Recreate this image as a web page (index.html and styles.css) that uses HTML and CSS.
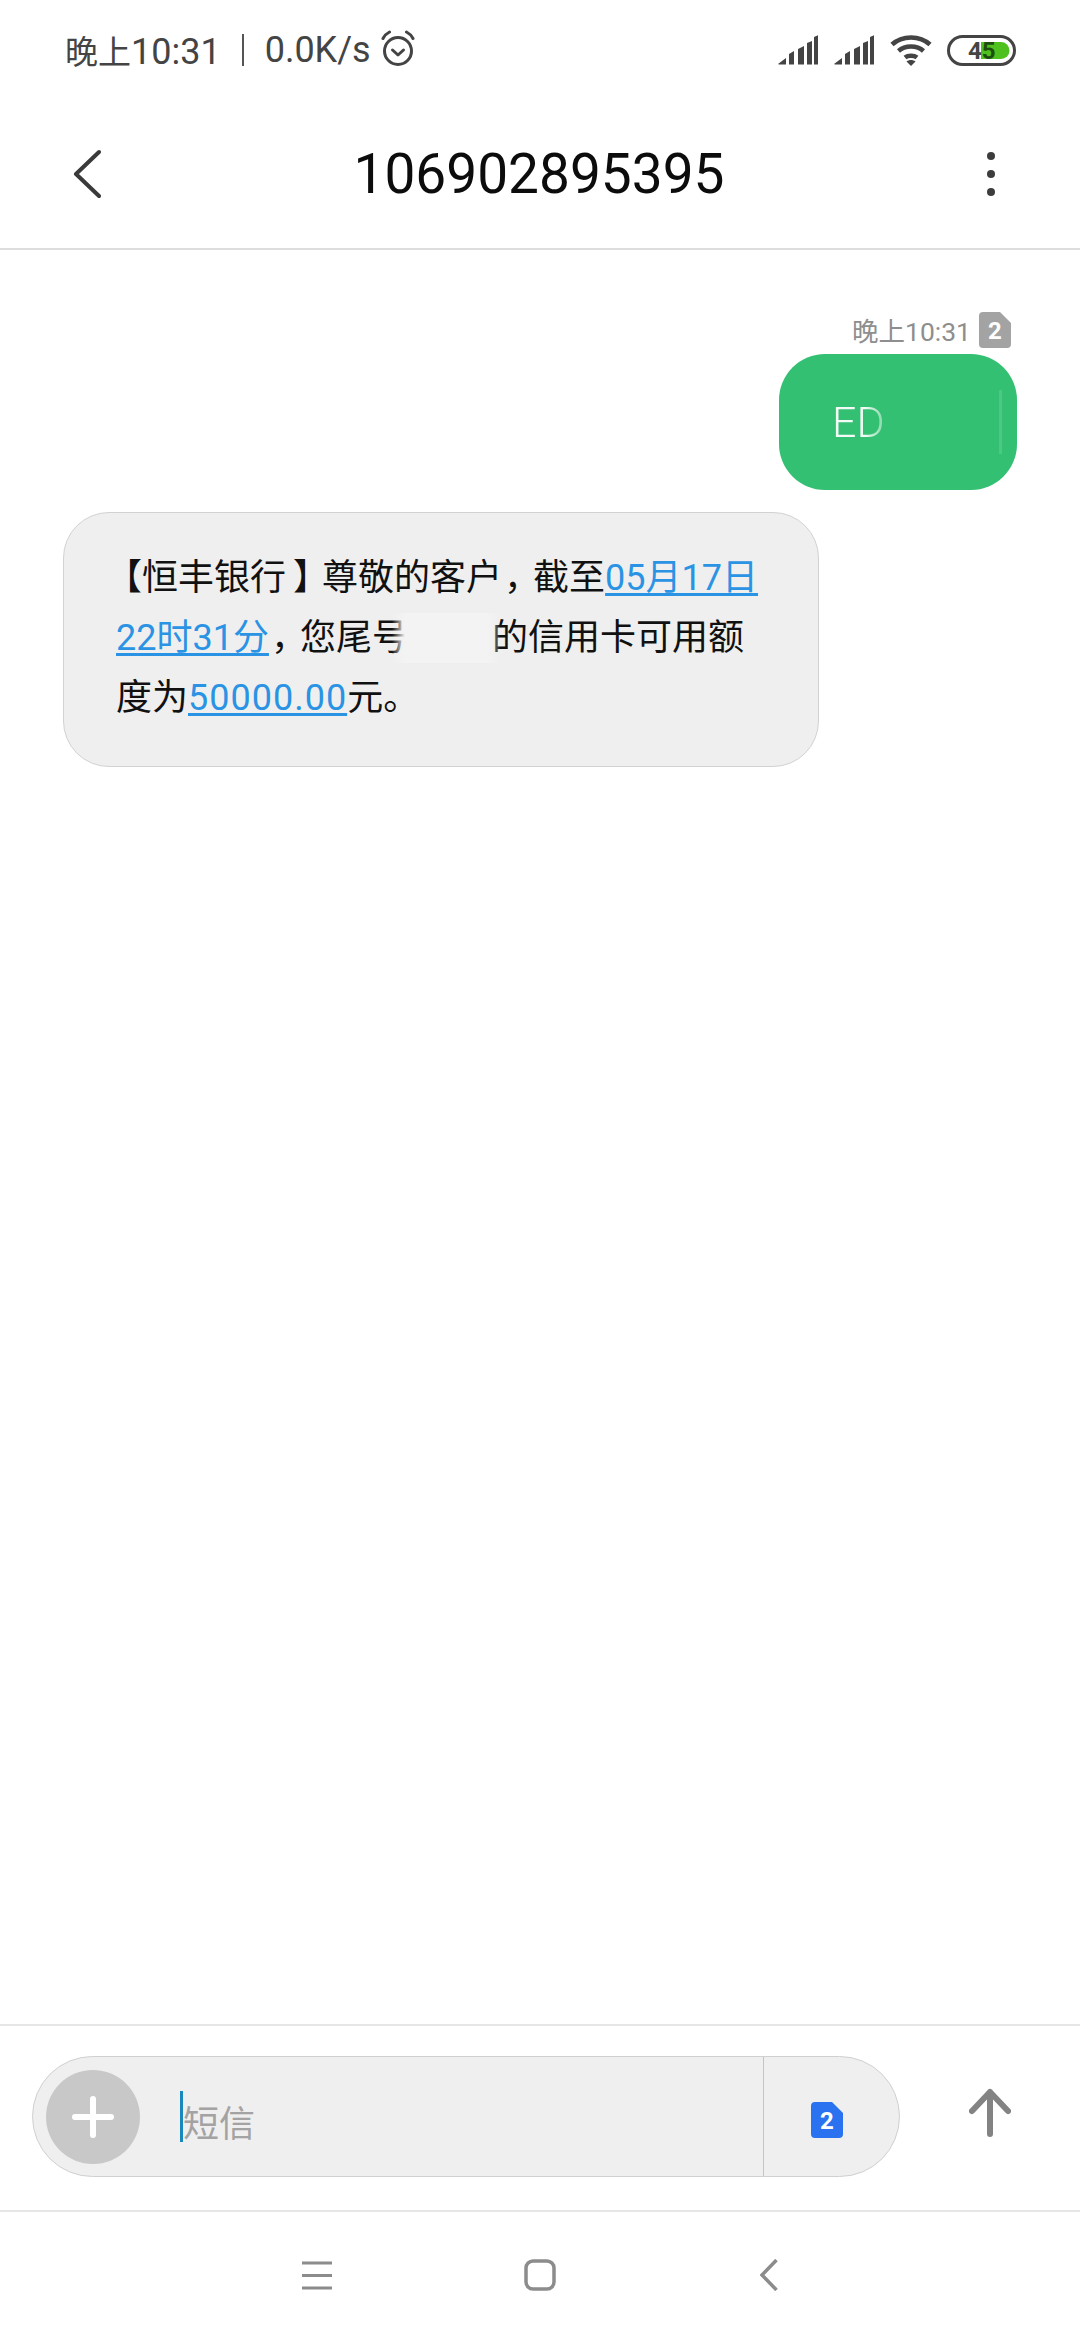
FILE: index.html

```html
<!DOCTYPE html>
<html lang="zh-CN">
<head>
  <meta charset="UTF-8" />
  <meta name="viewport" content="width=device-width, initial-scale=1.0" />
  <title>106902895395</title>
  <link rel="stylesheet" href="styles.css">
</head>
<body>
  <div class="status">
    <span class="status-time"><span class="status-cjk">晚上</span>10:31</span>
    <span class="status-sep"></span>
    <span class="status-speed">0.0K/s</span>
    <svg class="alarm" width="34" height="36" viewBox="0 0 34 36" fill="none" stroke="#444" stroke-width="3" stroke-linecap="round" stroke-linejoin="round">
      <circle cx="17" cy="21" r="13.5"/>
      <path d="M11.5 20l5.5 5 5.500-5"/>
      <path d="M2 8.5C3.5 5.5 5.5 3.5 8.5 2"/>
      <path d="M32 8.5C30.5 5.500 28.500 3.500 25.500 2"/>
    </svg>
    <div class="status-right">
      <svg width="40" height="30" viewBox="0 0 40 30" fill="#444"><path d="M0 29l8-6v6.500H1zM11 19l5-3v13.500h-5zM20 14l6-3v18.500h-6zM29 8l5-2v23.500h-5zM36 2l4.500-2v29.500H36z"/></svg>
      <svg class="sim2" width="40" height="30" viewBox="0 0 40 30" fill="#444"><path d="M0 29l8-6v6.500H1zM11 19l5-3v13.500h-5zM20 14l6-3v18.500h-6zM29 8l5-2v23.500h-5zM36 2l4.500-2v29.500H36z"/></svg>
      <svg class="wifi" width="42" height="31" viewBox="0 0 42 31" fill="none" stroke="#444" stroke-width="4.500">
        <path d="M2 9.500C12 0 30 0 40 9.500"/>
        <path d="M8.500 16C15 10 27 10 33.500 16"/>
        <path d="M15 22.500C18 20 24 20 27 22.500"/>
        <path d="M21 31l-4.500-4.500c2.500-2 6.500-2 9 0z" fill="#444" stroke="none"/>
      </svg>
      <svg class="battery" width="69" height="31" viewBox="0 0 69 31">
        <rect x="1.500" y="1.500" width="66" height="28" rx="14" fill="#fff" stroke="#444" stroke-width="3"/>
        <path d="M34 7h20a8.500 8.500 0 0 1 0 17H34z" fill="#4fc11f"/>
        <text class="battery-num" x="21" y="23.500">4<tspan fill="#1d4d10">5</tspan></text>
      </svg>
    </div>
  </div>

  <header class="topbar">
    <svg class="back" width="28" height="50" viewBox="0 0 28 50" fill="none" stroke="#3a3a3a" stroke-width="4" stroke-linecap="round" stroke-linejoin="round"><path d="M26 3L3 25l23 22"/></svg>
    <h1 class="title">106902895395</h1>
    <div class="more"><i></i><i></i><i></i></div>
  </header>

  <main class="thread">
    <div class="meta">
      <span>晚上10:31</span>
      <svg class="sim-badge" width="32" height="36" viewBox="0 0 32 36">
        <path d="M4 0h17l11 11v21a4 4 0 0 1-4 4H4a4 4 0 0 1-4-4V4a4 4 0 0 1 4-4z" fill="#a3a3a3"/>
        <text x="16" y="27" text-anchor="middle">2</text>
      </svg>
    </div>
    <div class="bubble-out">
      <span class="out-text">ED</span>
      <i class="out-streak"></i>
    </div>
    <div class="bubble-in">
      <span class="br-open">【</span>恒丰银行<span class="br-close">】</span>尊敬的客户<span class="comma">，</span>截至<a class="link">05月17日</a><br>
      <a class="link">22时31分</a><span class="comma">，</span>您尾号<span class="redact"></span>的信用卡可用额<br>
      度为<a class="link amount">50000.00</a>元。
    </div>
  </main>

  <div class="composer">
    <div class="pill">
      <div class="plus"><svg width="42" height="42" viewBox="0 0 42 42" stroke="#fff" stroke-width="6" stroke-linecap="round"><path d="M21 3v36M3 21h36"/></svg></div>
      <i class="caret"></i>
      <span class="placeholder">短信</span>
      <div class="sim-pick">
        <svg class="sim-badge blue" width="32" height="36" viewBox="0 0 32 36">
          <path d="M4 0h17l11 11v21a4 4 0 0 1-4 4H4a4 4 0 0 1-4-4V4a4 4 0 0 1 4-4z" fill="#2a72f0"/>
          <text x="16" y="27" text-anchor="middle">2</text>
        </svg>
      </div>
    </div>
    <svg class="send" width="42" height="50" viewBox="0 0 42 50" fill="none" stroke="#838383" stroke-width="6" stroke-linecap="round" stroke-linejoin="round"><path d="M21 46V4M3 23L21 4l18 19"/></svg>
  </div>

  <nav class="navbar">
    <svg width="32" height="32" viewBox="0 0 32 32" stroke="#8c8c8c" stroke-width="3"><path d="M1 4h30M1 16.500h30M1 29h30"/></svg>
    <svg class="nav-home" width="32" height="32" viewBox="0 0 32 32" fill="none" stroke="#8c8c8c" stroke-width="3.500"><rect x="2" y="2" width="28" height="28" rx="7"/></svg>
    <svg class="nav-back" width="18" height="32" viewBox="0 0 18 32" fill="none" stroke="#8c8c8c" stroke-width="3.500"><path d="M16.500 1L2 16l14.500 15"/></svg>
  </nav>
</body>
</html>
```

FILE: styles.css

```css
* {
  box-sizing: border-box;
}
body {
  margin: 0;
  width: 1080px;
  height: 2340px;
  display: flex;
  flex-direction: column;
  background: #fff;
  color: #111;
  font-family: Roboto, "Noto Sans CJK SC", sans-serif;
  overflow: hidden;
}

/* status bar */
.status {
  height: 100px;
  flex: none;
  display: flex;
  align-items: center;
  padding: 0 64px 0 65px;
  font-size: 36px;
  color: #444;
}
.status-cjk {
  font-size: 33px;
}
.status-sep {
  width: 2px;
  height: 32px;
  margin: 0 21px;
  background: #555;
}
.alarm {
  margin-left: 10px;
  margin-top: -4px;
}
.status-right {
  margin-left: auto;
  display: flex;
  align-items: center;
}
.sim2 {
  margin-left: 16px;
}
.wifi {
  margin-left: 16px;
}
.battery {
  margin-left: 15px;
}
.battery-num {
  font-size: 24px;
  font-weight: 700;
  fill: #444;
}

/* header */
.topbar {
  height: 150px;
  flex: none;
  display: flex;
  align-items: center;
  padding: 0 85px 0 73px;
  border-bottom: 2px solid #ddd;
}
.back {
  flex: none;
}
.title {
  flex: 1;
  margin: 0;
  padding-right: 10px;
  text-align: center;
  font-size: 55px;
  font-weight: 400;
  color: #0c0c0c;
}
.more {
  display: flex;
  flex-direction: column;
  gap: 10px;
}
.more i {
  width: 8px;
  height: 8px;
  border-radius: 50%;
  background: #3c3c3c;
}

/* messages */
.thread {
  flex: 1;
  padding-top: 60px;
}
.meta {
  display: flex;
  justify-content: flex-end;
  align-items: center;
  gap: 8px;
  padding-right: 69px;
  font-size: 26.5px;
  color: #8e8e8e;
}
.sim-badge text {
  font-family: Roboto, sans-serif;
  font-size: 24px;
  font-weight: 700;
  fill: #fff;
}
.bubble-out {
  width: 238px;
  height: 136px;
  margin: 5px 63px 0 auto;
  padding-left: 53px;
  display: flex;
  align-items: center;
  background: #34c073;
  border-radius: 46px;
}
.out-text {
  font-size: 43px;
  font-weight: 300;
  background: linear-gradient(90deg, #f2fbf6 62%, #7bd6a2 100%);
  -webkit-background-clip: text;
  background-clip: text;
  color: transparent;
}
.out-streak {
  width: 3px;
  height: 64px;
  margin-left: auto;
  margin-right: 15px;
  background: #4cc885;
}
.bubble-in {
  width: 756px;
  height: 255px;
  margin: 22px 0 0 63px;
  padding: 35px 0 0 52px;
  font-size: 36px;
  line-height: 60px;
  white-space: nowrap;
  background: #efefef;
  border: 1px solid #d2d2d2;
  border-radius: 46px;
}
.br-open {
  margin-left: -10px;
}
.br-close {
  margin-left: 7px;
  letter-spacing: -7px;
}
.comma {
  margin-left: 2px;
  letter-spacing: -7px;
}
.link {
  color: #2a93e4;
  text-decoration: underline;
  text-underline-offset: 3px;
}
.amount {
  letter-spacing: 1px;
}
.redact {
  position: relative;
  display: inline-block;
  width: 108px;
  height: 50px;
  vertical-align: top;
  margin: 5px -8px 0 -16px;
  background: linear-gradient(90deg, rgba(243,243,243,0), #f3f3f3 12%, #f3f3f3 88%, rgba(243,243,243,0));
}

/* input */
.composer {
  height: 186px;
  flex: none;
  display: flex;
  align-items: flex-start;
  padding: 30px 0 0 32px;
  border-top: 2px solid #e6e6e6;
}
.pill {
  width: 868px;
  height: 121px;
  display: flex;
  align-items: center;
  padding-left: 13px;
  background: #efefef;
  border: 1px solid #d0d0d0;
  border-radius: 61px;
}
.plus {
  width: 94px;
  height: 94px;
  display: flex;
  align-items: center;
  justify-content: center;
  border-radius: 50%;
  background: #c8c8c8;
}
.caret {
  width: 3px;
  height: 51px;
  margin-left: 40px;
  background: #1a87bd;
}
.placeholder {
  font-size: 36px;
  color: #a3a3a3;
  margin-top: 8px;
}
.sim-pick {
  margin-left: auto;
  width: 136px;
  height: 100%;
  display: flex;
  align-items: center;
  padding: 7px 0 0 47px;
  border-left: 1px solid #c4c4c4;
}
.send {
  margin: 32px 0 0 69px;
}

/* navigation */
.navbar {
  height: 130px;
  flex: none;
  display: flex;
  align-items: center;
  padding: 0 0 3px 301px;
  gap: 191px;
  border-top: 2px solid #e6e6e6;
}
.nav-back {
  margin-left: 13px;
}
```
